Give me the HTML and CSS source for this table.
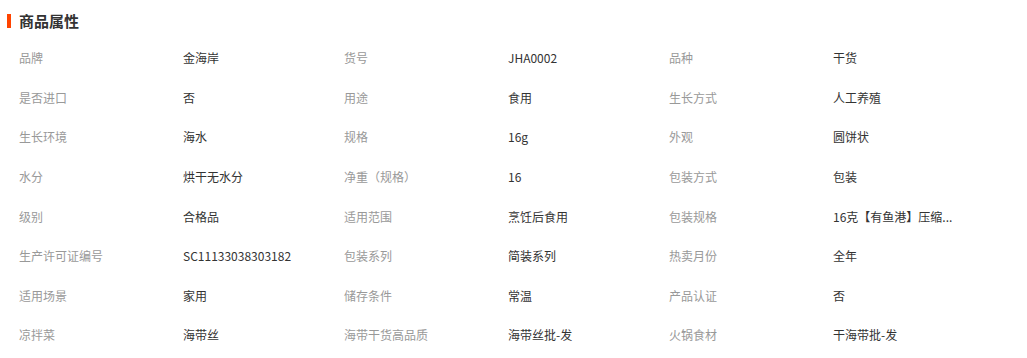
FILE: index.html
```html
<!DOCTYPE html>
<html lang="zh">
<head>
<meta charset="utf-8">
<link rel="stylesheet" href="styles.css">
</head>
<body>
<div class="attrs">
  <h2 class="title"><span class="bar"></span>商品属性</h2>
  <div class="grid">
    <div class="k">品牌</div><div class="v">金海岸</div>
    <div class="k">货号</div><div class="v">JHA0002</div>
    <div class="k">品种</div><div class="v">干货</div>

    <div class="k">是否进口</div><div class="v">否</div>
    <div class="k">用途</div><div class="v">食用</div>
    <div class="k">生长方式</div><div class="v">人工养殖</div>

    <div class="k">生长环境</div><div class="v">海水</div>
    <div class="k">规格</div><div class="v">16g</div>
    <div class="k">外观</div><div class="v">圆饼状</div>

    <div class="k">水分</div><div class="v">烘干无水分</div>
    <div class="k">净重（规格）</div><div class="v">16</div>
    <div class="k">包装方式</div><div class="v">包装</div>

    <div class="k">级别</div><div class="v">合格品</div>
    <div class="k">适用范围</div><div class="v">烹饪后食用</div>
    <div class="k">包装规格</div><div class="v">16克【有鱼港】压缩...</div>

    <div class="k">生产许可证编号</div><div class="v">SC11133038303182</div>
    <div class="k">包装系列</div><div class="v">简装系列</div>
    <div class="k">热卖月份</div><div class="v">全年</div>

    <div class="k">适用场景</div><div class="v">家用</div>
    <div class="k">储存条件</div><div class="v">常温</div>
    <div class="k">产品认证</div><div class="v">否</div>

    <div class="k">凉拌菜</div><div class="v">海带丝</div>
    <div class="k">海带干货高品质</div><div class="v">海带丝批-发</div>
    <div class="k">火锅食材</div><div class="v">干海带批-发</div>
  </div>
</div>
</body>
</html>
```

FILE: styles.css
```css
html, body {
  margin: 0;
  padding: 0;
  background: #fff;
}

body {
  font-family: "Noto Sans CJK SC", "Noto Sans", sans-serif;
  font-size: 12px;
  color: #333;
}

.attrs {
  padding: 11px 0 0 7px;
}

.title {
  display: flex;
  align-items: center;
  margin: 0 0 7px 0;
  height: 20px;
  font-size: 15px;
  font-weight: bold;
  color: #333;
  line-height: 20px;
}

.bar {
  display: inline-block;
  width: 4px;
  height: 14px;
  background: #ff4400;
  margin-right: 8px;
}

.grid {
  display: grid;
  grid-template-columns: 164px 161px 164px 161px 164px 161px;
  grid-auto-rows: 39.57px;
  padding-left: 12px;
  align-items: center;
}

.k {
  color: #999;
  white-space: nowrap;
}

.v {
  color: #333;
  white-space: nowrap;
}
```
